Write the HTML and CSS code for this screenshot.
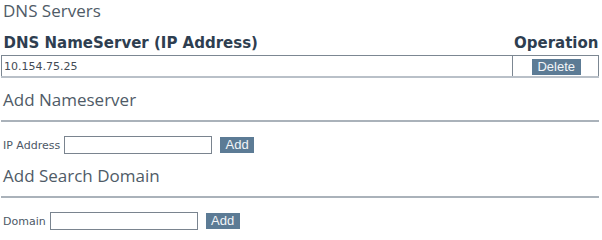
FILE: index.html
```html
<!DOCTYPE html>
<html>
<head>
<meta charset="utf-8">
<link rel="stylesheet" href="styles.css">
</head>
<body>
<div class="page">
  <h2 class="title">DNS Servers</h2>
  <table class="dns-table">
    <thead>
      <tr>
        <th class="col-ip">DNS NameServer (IP Address)</th>
        <th class="col-op">Operation</th>
      </tr>
    </thead>
    <tbody>
      <tr>
        <td class="cell-ip">10.154.75.25</td>
        <td class="cell-op"><button class="btn">Delete</button></td>
      </tr>
    </tbody>
  </table>

  <h2 class="section">Add Nameserver</h2>
  <div class="rule"></div>
  <div class="form-row">
    <label class="label">IP Address</label>
    <input class="field" type="text">
    <button class="btn btn-add">Add</button>
  </div>

  <h2 class="section">Add Search Domain</h2>
  <div class="rule"></div>
  <div class="form-row">
    <label class="label">Domain</label>
    <input class="field" type="text">
    <button class="btn btn-add">Add</button>
  </div>
</div>
</body>
</html>
```

FILE: styles.css
```css
html, body {
  margin: 0;
  padding: 0;
  background: #ffffff;
}
.page {
  padding: 0 3px 0 1px;
  font-family: "DejaVu Sans", Verdana, sans-serif;
  color: #4b5561;
}
.title, .section {
  font-family: "Open Sans", "Noto Sans", sans-serif;
  font-weight: normal;
  font-size: 17px;
  line-height: 22px;
  color: #4f5b67;
  margin: 0;
  padding-left: 2px;
}
.title {
  padding-top: 0;
  height: 30px;
}
.dns-table {
  width: 598px;
  border-collapse: collapse;
}
.dns-table th {
  font-family: "DejaVu Sans", Verdana, sans-serif;
  font-size: 15px;
  font-weight: bold;
  color: #2e3e50;
  padding: 0 0 3px 2px;
  height: 22px;
  vertical-align: bottom;
}
.col-ip { text-align: left; }
.col-op { text-align: right; width: 82px; padding-right: 0 !important; }
.dns-table td {
  border: 1px solid #7c8792;
  border-bottom: 2px solid #b9c0c8;
  height: 20px;
  padding: 0 2px;
  font-size: 11px;
  color: #444c55;
}
.cell-op { text-align: center; padding-left: 4px !important; }
.btn {
  background: #5c7b95;
  color: #f2f5f8;
  border: none;
  font-family: "Liberation Sans", Arial, sans-serif;
  font-size: 13px;
  line-height: 16px;
  height: 16px;
  padding: 0 8px;
  margin: 0;
  cursor: pointer;
}
.dns-table .btn { width: 49px; padding: 0; margin-top: 1px; }
.section {
  margin-top: 11px;
}
.rule {
  height: 0;
  border-top: 2px solid #aab2ba;
  margin: 9px 0 14px 0;
  width: 598px;
}
.form-row {
  display: flex;
  align-items: center;
  height: 18px;
  margin-bottom: 11px;
  padding-left: 2px;
}
.label {
  font-size: 11px;
  color: #4c5866;
  margin-right: 4px;
}
.field {
  width: 144px;
  height: 14px;
  border: 1px solid #7a848f;
  padding: 1px;
  margin: 0 8px 0 0;
  font-size: 11px;
}
.btn-add {
  width: 34px;
  padding: 0;
}
```
